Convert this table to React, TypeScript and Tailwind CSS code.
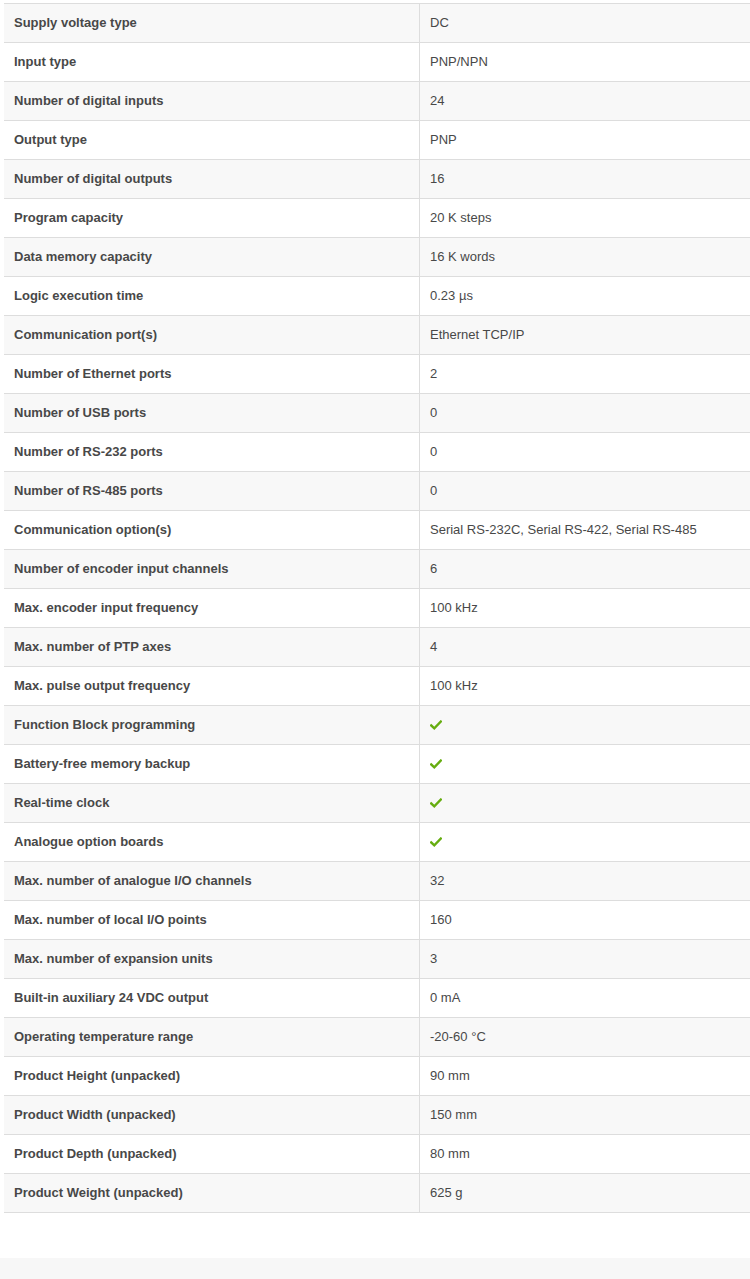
const rows: [string, string | null][] = [
  ['Supply voltage type', 'DC'],
  ['Input type', 'PNP/NPN'],
  ['Number of digital inputs', '24'],
  ['Output type', 'PNP'],
  ['Number of digital outputs', '16'],
  ['Program capacity', '20 K steps'],
  ['Data memory capacity', '16 K words'],
  ['Logic execution time', '0.23 µs'],
  ['Communication port(s)', 'Ethernet TCP/IP'],
  ['Number of Ethernet ports', '2'],
  ['Number of USB ports', '0'],
  ['Number of RS-232 ports', '0'],
  ['Number of RS-485 ports', '0'],
  ['Communication option(s)', 'Serial RS-232C, Serial RS-422, Serial RS-485'],
  ['Number of encoder input channels', '6'],
  ['Max. encoder input frequency', '100 kHz'],
  ['Max. number of PTP axes', '4'],
  ['Max. pulse output frequency', '100 kHz'],
  ['Function Block programming', null],
  ['Battery-free memory backup', null],
  ['Real-time clock', null],
  ['Analogue option boards', null],
  ['Max. number of analogue I/O channels', '32'],
  ['Max. number of local I/O points', '160'],
  ['Max. number of expansion units', '3'],
  ['Built-in auxiliary 24 VDC output', '0 mA'],
  ['Operating temperature range', '-20-60 °C'],
  ['Product Height (unpacked)', '90 mm'],
  ['Product Width (unpacked)', '150 mm'],
  ['Product Depth (unpacked)', '80 mm'],
  ['Product Weight (unpacked)', '625 g'],
];

function Check() {
  return (
    <svg width="12" height="10" viewBox="0 0 12 10" className="block">
      <path d="M1.2 5.4 L4.3 8.3 L10.8 1.6" fill="none" stroke="#66ad10" strokeWidth="2.4" strokeLinecap="square" />
    </svg>
  );
}

export default function App() {
  return (
    <div className="min-h-[1279px] bg-white font-['Liberation_Sans',Arial,sans-serif] text-[13px] text-[#484848] flex flex-col">
      <div className="pt-[3px] pl-[4px]">
        <div className="border-b border-[#dddddd]">
          {rows.map(([label, value], i) => (
            <div
              key={label}
              className={`flex h-[39px] border-t border-[#dddddd] ${i % 2 === 0 ? 'bg-[#f8f8f8]' : 'bg-white'}`}
            >
              <div className="w-[416px] shrink-0 border-r border-[#dddddd] pl-[10px] flex items-center font-bold">
                {label}
              </div>
              <div className="flex-1 pl-[10px] flex items-center">
                {value === null ? <Check /> : value}
              </div>
            </div>
          ))}
        </div>
      </div>
      <div className="h-[21px] bg-[#f7f7f7] mt-auto" />
    </div>
  );
}
